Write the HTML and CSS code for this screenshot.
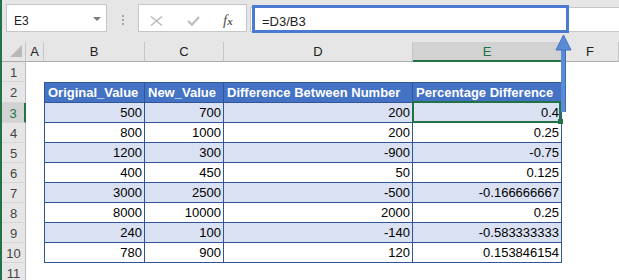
FILE: index.html
```html
<!DOCTYPE html>
<html lang="en">
<head>
    <meta charset="UTF-8">
    <meta name="viewport" content="width=device-width, initial-scale=1.0">
    <title>Percentage Difference</title>

    <link rel="stylesheet" href="styles.css">
</head>

<body>

  <div class="page">

    <!-- barra de formula -->
    <div class="toolbar">
      <div class="namebox">
        <span class="nameText">E3</span>
        <span class="caret"></span>
      </div>
      <div class="grip"><i></i><i></i><i></i></div>
      <div class="fbuttons">
        <svg class="icoX" width="13" height="10" viewBox="0 0 13 10">
          <path d="M1 0.5 L12 9.5 M12 0.5 L1 9.5" stroke="#b9b9b9" stroke-width="1.4" fill="none"/>
        </svg>
        <svg class="icoOk" width="13" height="10" viewBox="0 0 13 10">
          <path d="M1 5 L5 8.8 L12 1" stroke="#bdbdbd" stroke-width="2.2" fill="none"/>
        </svg>
        <span class="fx"><i>f</i><i class="fxX">x</i></span>
      </div>
      <div class="formula">=D3/B3</div>
    </div>

    <!-- planilha -->
    <div class="sheet">
      <div class="corner"></div>
      <div class="colhd">A</div>
      <div class="colhd">B</div>
      <div class="colhd">C</div>
      <div class="colhd">D</div>
      <div class="colhd colSel">E</div>
      <div class="colhd">F</div>

      <div class="rowhd">1</div>
      <div></div><div></div><div></div><div></div><div></div><div></div>

      <div class="rowhd">2</div>
      <div></div>
      <div class="c hd first">Original_Value</div>
      <div class="c hd">New_Value</div>
      <div class="c hd">Difference Between Number</div>
      <div class="c hd">Percentage Difference</div>
      <div></div>

      <div class="rowhd rowSel">3</div>
      <div></div>
      <div class="c num band first">500</div>
      <div class="c num band">700</div>
      <div class="c num band">200</div>
      <div class="c num band sel">0.4</div>
      <div></div>

      <div class="rowhd">4</div>
      <div></div>
      <div class="c num first">800</div>
      <div class="c num">1000</div>
      <div class="c num">200</div>
      <div class="c num">0.25</div>
      <div></div>

      <div class="rowhd">5</div>
      <div></div>
      <div class="c num band first">1200</div>
      <div class="c num band">300</div>
      <div class="c num band">-900</div>
      <div class="c num band">-0.75</div>
      <div></div>

      <div class="rowhd">6</div>
      <div></div>
      <div class="c num first">400</div>
      <div class="c num">450</div>
      <div class="c num">50</div>
      <div class="c num">0.125</div>
      <div></div>

      <div class="rowhd">7</div>
      <div></div>
      <div class="c num band first">3000</div>
      <div class="c num band">2500</div>
      <div class="c num band">-500</div>
      <div class="c num band">-0.166666667</div>
      <div></div>

      <div class="rowhd">8</div>
      <div></div>
      <div class="c num first">8000</div>
      <div class="c num">10000</div>
      <div class="c num">2000</div>
      <div class="c num">0.25</div>
      <div></div>

      <div class="rowhd">9</div>
      <div></div>
      <div class="c num band first">240</div>
      <div class="c num band">100</div>
      <div class="c num band">-140</div>
      <div class="c num band">-0.583333333</div>
      <div></div>

      <div class="rowhd">10</div>
      <div></div>
      <div class="c num first">780</div>
      <div class="c num">900</div>
      <div class="c num">120</div>
      <div class="c num">0.153846154</div>
      <div></div>

      <div class="rowhd">11</div>
      <div></div><div></div><div></div><div></div><div></div><div></div>
    </div>

    <!-- anotacao: caixa azul e seta -->
    <svg class="annot" width="619" height="280" viewBox="0 0 619 280">
      <rect x="253.5" y="6.5" width="314" height="25" fill="none" stroke="#4a7bd0" stroke-width="3"/>
      <rect x="561" y="48" width="5" height="64" fill="#5b8ad6"/>
      <line x1="565.5" y1="48" x2="565.5" y2="112" stroke="#3f6cb8" stroke-width="1"/>
      <polygon points="563.5,35 556,50 571,50" fill="#5b8ad6" stroke="#4472c4" stroke-width="1"/>
    </svg>

  </div>

</body>
</html>
```

FILE: styles.css
```css
body {
  margin: 0;
  background: #fff;
  font-family: "Liberation Sans", Arial, sans-serif;
}

.page {
  position: relative;
  width: 617px;
  height: 280px;
  border-left: 2px solid #217346;
  overflow: hidden;
  background: #fff;
}

/* barra de formula */

.toolbar {
  display: flex;
  align-items: flex-start;
  height: 42px;
  box-sizing: border-box;
  padding: 4px 0 0 4px;
  background: #e6e6e6;
}

.namebox {
  display: flex;
  align-items: flex-start;
  width: 101px;
  height: 28px;
  box-sizing: border-box;
  border: 1px solid #c6c6c6;
  background: #fff;
  padding: 9px 5px 0 7px;
  font-size: 12px;
  line-height: 14px;
  color: #222;
}

.nameText {
  flex: 1;
}

.caret {
  margin-top: 3px;
  border-left: 4px solid transparent;
  border-right: 4px solid transparent;
  border-top: 4px solid #7a7a7a;
}

.grip {
  width: 31px;
  height: 28px;
  box-sizing: border-box;
  padding-top: 11px;
  display: flex;
  flex-direction: column;
  align-items: center;
  gap: 2px;
}

.grip i {
  width: 2px;
  height: 2px;
  background: #a6a6a6;
}

.fbuttons {
  display: flex;
  align-items: flex-start;
  width: 109px;
  height: 28px;
  box-sizing: border-box;
  border: 1px solid #c6c6c6;
  background: #fff;
  padding-top: 11px;
}

.icoX {
  margin-left: 11px;
}

.icoOk {
  margin-left: 24px;
}

.fx {
  margin-left: 23px;
  margin-top: -3px;
  font-family: "Liberation Serif", serif;
  color: #555;
  font-size: 15px;
  line-height: 15px;
}

.fxX {
  font-size: 11px;
  font-weight: bold;
}

.formula {
  flex: 1;
  height: 25px;
  margin: 3px 0 0 3px;
  box-sizing: border-box;
  border: 1px solid #c6c6c6;
  border-right: none;
  background: #fff;
  padding: 6px 0 0 11px;
  font-size: 13px;
  line-height: 15px;
  color: #222;
}

/* planilha */

.sheet {
  display: grid;
  grid-template-columns: 24px 18px 101px 79px 189px 149px 1fr;
  grid-template-rows: 20px 20px 21px repeat(8, 20px) 20px;
  font-size: 13px;
}

.corner {
  display: flex;
  justify-content: flex-end;
  align-items: flex-end;
  padding: 0 3px 4px 0;
  background: #e6e6e6;
  border-right: 1px solid #c6c6c6;
  border-bottom: 1px solid #ababab;
}

.corner::after {
  content: "";
  border-left: 12px solid transparent;
  border-bottom: 12px solid #b9b9b9;
}

.colhd {
  background: #e6e6e6;
  border-right: 1px solid #c6c6c6;
  border-bottom: 1px solid #ababab;
  text-align: center;
  line-height: 20px;
  color: #222;
}

.colSel {
  background: #d2d2d2;
  border-bottom: 2px solid #217346;
  color: #217346;
}

.rowhd {
  display: flex;
  align-items: center;
  justify-content: center;
  padding-top: 1px;
  background: #e6e6e6;
  border-right: 1px solid #bcbcbc;
  border-bottom: 1px solid #d6d6d6;
  color: #444;
}

.rowSel {
  background: #d2d2d2;
  border-right: 2px solid #217346;
  color: #217346;
}

.c {
  border-right: 1px solid #2f5597;
  border-bottom: 1px solid #2f5597;
  padding: 1px 2px 0 3px;
  line-height: 18px;
  white-space: nowrap;
  overflow: hidden;
  color: #000;
}

.first {
  border-left: 1px solid #2f5597;
}

.hd {
  border-top: 1px solid #2f5597;
  background: #4472c4;
  color: #fff;
  font-weight: bold;
}

.num {
  text-align: right;
}

.band {
  background: #d9e1f2;
}

/* celula selecionada */

.sel {
  position: relative;
  overflow: visible;
}

.sel::before {
  content: "";
  position: absolute;
  left: -1px;
  top: -2px;
  right: 0;
  bottom: -1px;
  border: 2px solid #217346;
}

.sel::after {
  content: "";
  position: absolute;
  right: -2px;
  bottom: -2px;
  width: 5px;
  height: 5px;
  background: #217346;
}

.annot {
  position: absolute;
  left: -2px;
  top: 0;
}
```
